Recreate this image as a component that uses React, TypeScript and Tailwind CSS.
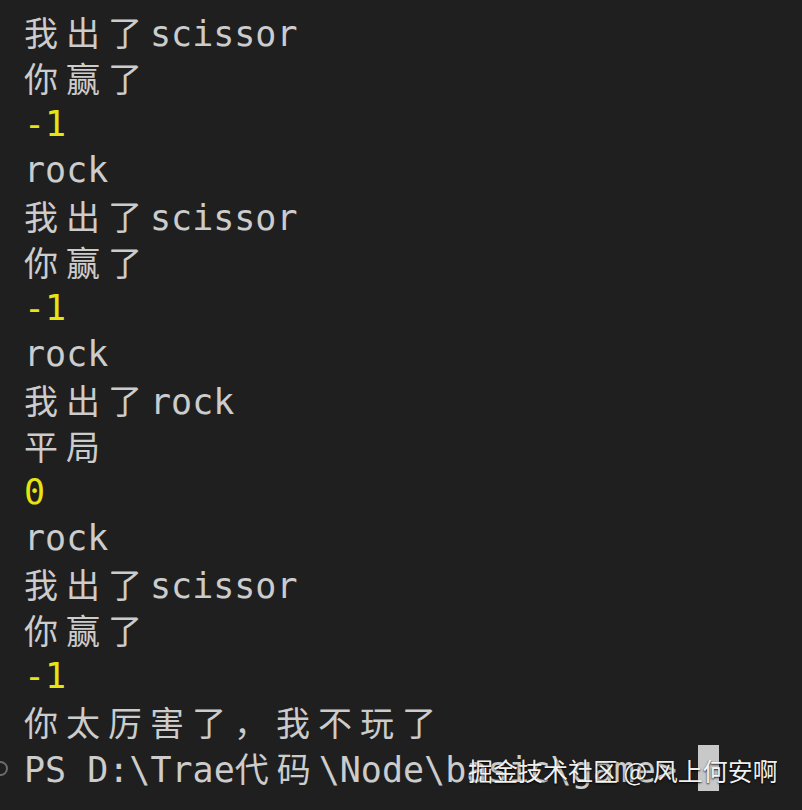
import React from 'react';

const lines: { text: string; yellow?: boolean }[] = [
  { text: '我出了scissor' },
  { text: '你赢了' },
  { text: '-1', yellow: true },
  { text: 'rock' },
  { text: '我出了scissor' },
  { text: '你赢了' },
  { text: '-1', yellow: true },
  { text: 'rock' },
  { text: '我出了rock' },
  { text: '平局' },
  { text: '0', yellow: true },
  { text: 'rock' },
  { text: '我出了scissor' },
  { text: '你赢了' },
  { text: '-1', yellow: true },
  { text: '你太厉害了，我不玩了' },
];

// split a line into runs of wide (CJK) and narrow chars
const Segments: React.FC<{ text: string }> = ({ text }) => {
  const runs: { wide: boolean; s: string }[] = [];
  for (const ch of text) {
    const wide = ch.charCodeAt(0) > 0x2e80;
    const last = runs[runs.length - 1];
    if (last && last.wide === wide) last.s += ch;
    else runs.push({ wide, s: ch });
  }
  return (
    <>
      {runs.map((r, i) =>
        r.wide ? (
          <span key={i} className="font-['Noto_Sans_CJK_SC',sans-serif] text-[34px] tracking-[8px]">
            {r.s}
          </span>
        ) : (
          <span key={i}>{r.s}</span>
        )
      )}
    </>
  );
};

const App: React.FC = () => {
  return (
    <div className="w-[802px] h-[810px] overflow-hidden bg-[#1f1f1f] text-[#cccccc] font-['DejaVu_Sans_Mono',monospace] text-[35px] leading-[46px] pt-[9px] pl-[24px] whitespace-pre">
      {lines.map((l, i) => (
        <div key={i} className={`h-[46px] ${l.yellow ? 'text-[#e5e510]' : ''}`}>
          <Segments text={l.text} />
        </div>
      ))}

      {/* prompt line */}
      <div className="relative h-[46px]">
        <span className="absolute left-[-31px] top-[16px] w-[15px] h-[15px] rounded-full border-2 border-[#6b6b6b]" />
        <Segments text={'PS D:\\Trae代码\\Node\\basic\\game> '} />
        <span className="inline-block align-top w-[21px] h-[46px] bg-[#c8c8c8]" />
        <div className="absolute left-[444px] top-[8px] font-['Noto_Sans_CJK_SC',sans-serif] text-[25px] leading-[34px] text-white/95 [text-shadow:0_1px_2px_rgba(0,0,0,0.9)]">
          掘金技术社区 @ 风上何安啊
        </div>
      </div>
    </div>
  );
};

export default App;
